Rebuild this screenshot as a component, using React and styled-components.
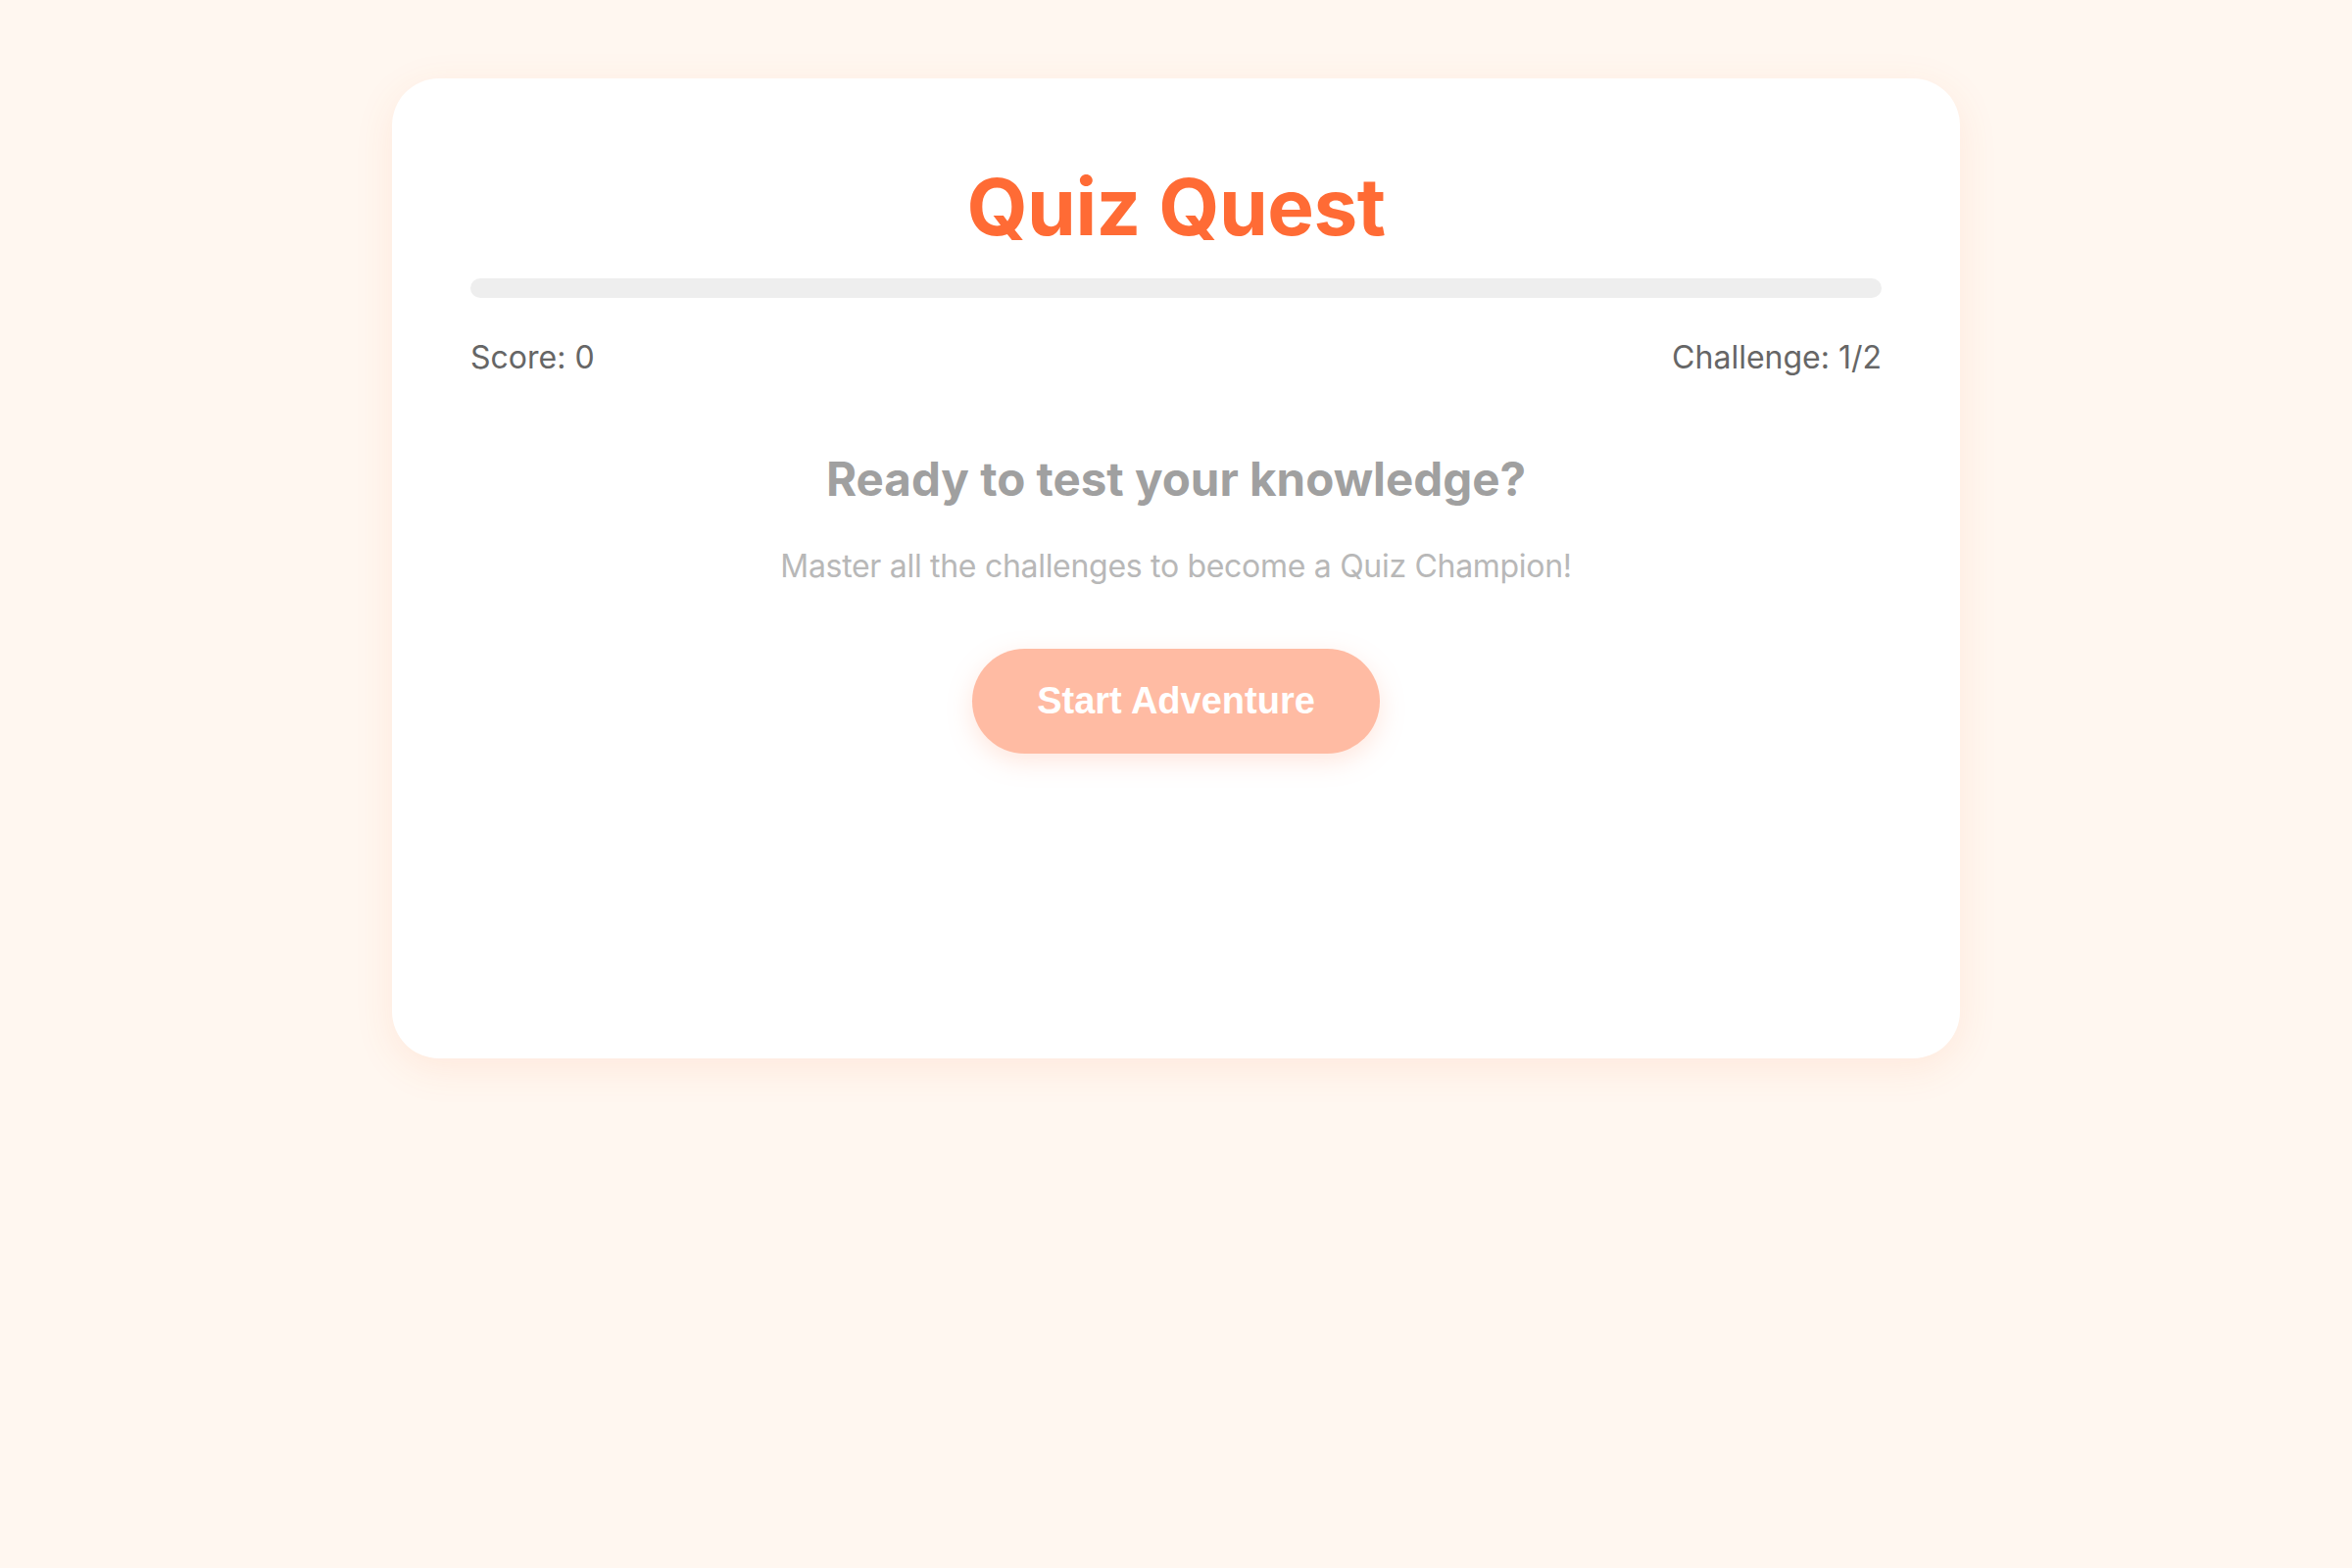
import React from 'react';
import styled, { createGlobalStyle } from 'styled-components';

const GlobalStyle = createGlobalStyle`
  * { box-sizing: border-box; }
  html, body {
    margin: 0;
    padding: 0;
    background: #fff7f0;
    font-family: Inter, "Noto Sans", sans-serif;
  }
`

const Page = styled.div`
  min-height: 100vh;
  display: flex;
  justify-content: center;
  padding-top: 80px;
`

const Card = styled.div`
  width: 1600px;
  min-height: 1000px;
  align-self: flex-start;
  background: #ffffff;
  border-radius: 48px;
  padding: 80px;
  box-shadow: 0 10px 40px rgba(255, 107, 53, 0.1);
  display: flex;
  flex-direction: column;
  align-items: center;
`

const Title = styled.h1`
  margin: 3px 0 0;
  font-size: 80px;
  line-height: 1.21;
  font-weight: 700;
  color: #ff6b35;
  letter-spacing: -0.5px;
`

const ProgressTrack = styled.div`
  width: 100%;
  height: 20px;
  margin-top: 24px;
  border-radius: 10px;
  background: #eeeeee;
  overflow: hidden;
`

const ProgressFill = styled.div`
  height: 100%;
  background: #ff6b35;
  border-radius: 10px;
`

const Stats = styled.div`
  width: 100%;
  margin-top: 41px;
  display: flex;
  justify-content: space-between;
  font-size: 32px;
  color: #666666;
`

const Heading = styled.h2`
  margin: 76px 0 0;
  font-size: 47.5px;
  line-height: 1.2;
  font-weight: 700;
  color: #a0a0a0;
`

const Subtitle = styled.p`
  margin: 42px 0 0;
  font-size: 32px;
  line-height: 1.21;
  color: #b8b8b8;
  letter-spacing: -0.3px;
`

const StartButton = styled.button`
  margin-top: 64px;
  padding: 32px 66px;
  border: none;
  border-radius: 60px;
  background: #ff6b35;
  color: #ffffff;
  font-family: "Liberation Sans", Arial, sans-serif;
  font-size: 38px;
  font-weight: 700;
  opacity: ${props => (props.faded ? 0.45 : 1)};
  box-shadow: 0 8px 24px rgba(255, 107, 53, 0.35);
  cursor: pointer;
`

const App = () => {
  const score = 0
  const current = 1
  const total = 2
  const progress = 0

  return (
    <>
      <GlobalStyle />
      <Page>
        <Card>
          <Title>Quiz Quest</Title>
          <ProgressTrack>
            <ProgressFill style={{ width: `${progress}%` }} />
          </ProgressTrack>
          <Stats>
            <span>Score: {score}</span>
            <span>Challenge: {current}/{total}</span>
          </Stats>
          <Heading>Ready to test your knowledge?</Heading>
          <Subtitle>Master all the challenges to become a Quiz Champion!</Subtitle>
          <StartButton faded>Start Adventure</StartButton>
        </Card>
      </Page>
    </>
  )
}

export default App;
